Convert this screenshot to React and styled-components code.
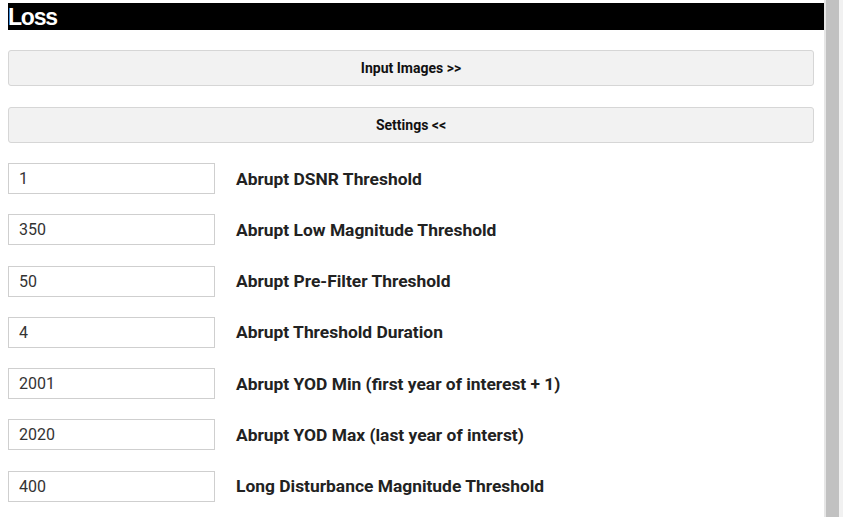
import React from "react";
import styled, { createGlobalStyle } from "styled-components";

const Global = createGlobalStyle`
  html, body { margin: 0; padding: 0; background: #fff; overflow: hidden; }
  body { font-family: Roboto, "Liberation Sans", sans-serif; }
`;

const Page = styled.div`
  display: flex;
  width: 843px;
  height: 517px;
  overflow: hidden;
`;

const Content = styled.div`
  flex: 1;
  padding: 3px 0 0 8px;
  display: flex;
  flex-direction: column;
  & > * { flex-shrink: 0; }
`;

const ScrollTrack = styled.div`
  width: 19px;
  display: flex;
  background: #f1f1f1;
  border-left: 2px solid #e6e6e6;
  box-sizing: border-box;
`;

const ScrollThumb = styled.div`
  width: 13px;
  background: #c1c1c1;
`;

const Header = styled.div`
  background: #000;
  color: #fff;
  height: 27px;
  line-height: 28px;
  font-family: "Liberation Sans", Arial, sans-serif;
  font-weight: bold;
  font-size: 23px;
  letter-spacing: -1.2px;
  margin-bottom: 20px;
`;

const ToggleButton = styled.button`
  display: block;
  width: 806px;
  height: 36px;
  box-sizing: border-box;
  margin: 0 0 21px 0;
  background: #f2f2f2;
  border: 1px solid #d6d6d6;
  border-radius: 3px;
  font-family: Roboto, "Liberation Sans", sans-serif;
  font-weight: 700;
  font-size: 14px;
  color: #111;
  padding: 0;
`;

const Fields = styled.div`
  display: flex;
  flex-direction: column;
  gap: 20.25px;
  margin-top: -1px;
`;

const Row = styled.div`
  display: flex;
  align-items: center;
  gap: 21px;
  height: 31px;
  flex-shrink: 0;
`;

const Field = styled.input`
  width: 207px;
  height: 31px;
  box-sizing: border-box;
  border: 1px solid #cfcfcf;
  padding: 0 10px;
  font-family: Roboto, "Liberation Sans", sans-serif;
  font-size: 16px;
  color: #333;
  background: #fff;
  outline: none;
`;

const Label = styled.label`
  font-family: Roboto, "Liberation Sans", sans-serif;
  font-weight: 700;
  font-size: 17.4px;
  color: #222;
`;

const fields = [
  ["1", "Abrupt DSNR Threshold"],
  ["350", "Abrupt Low Magnitude Threshold"],
  ["50", "Abrupt Pre-Filter Threshold"],
  ["4", "Abrupt Threshold Duration"],
  ["2001", "Abrupt YOD Min (first year of interest + 1)"],
  ["2020", "Abrupt YOD Max (last year of interst)"],
  ["400", "Long Disturbance Magnitude Threshold"],
];

export default function App() {
  return (
    <Page>
      <Global />
      <Content>
        <Header>Loss</Header>
        <ToggleButton>Input Images &gt;&gt;</ToggleButton>
        <ToggleButton>Settings &lt;&lt;</ToggleButton>
        <Fields>
          {fields.map(([v, l], i) => (
            <Row key={i}>
              <Field defaultValue={v} />
              <Label>{l}</Label>
            </Row>
          ))}
        </Fields>
      </Content>
      <ScrollTrack>
        <ScrollThumb />
      </ScrollTrack>
    </Page>
  );
}
